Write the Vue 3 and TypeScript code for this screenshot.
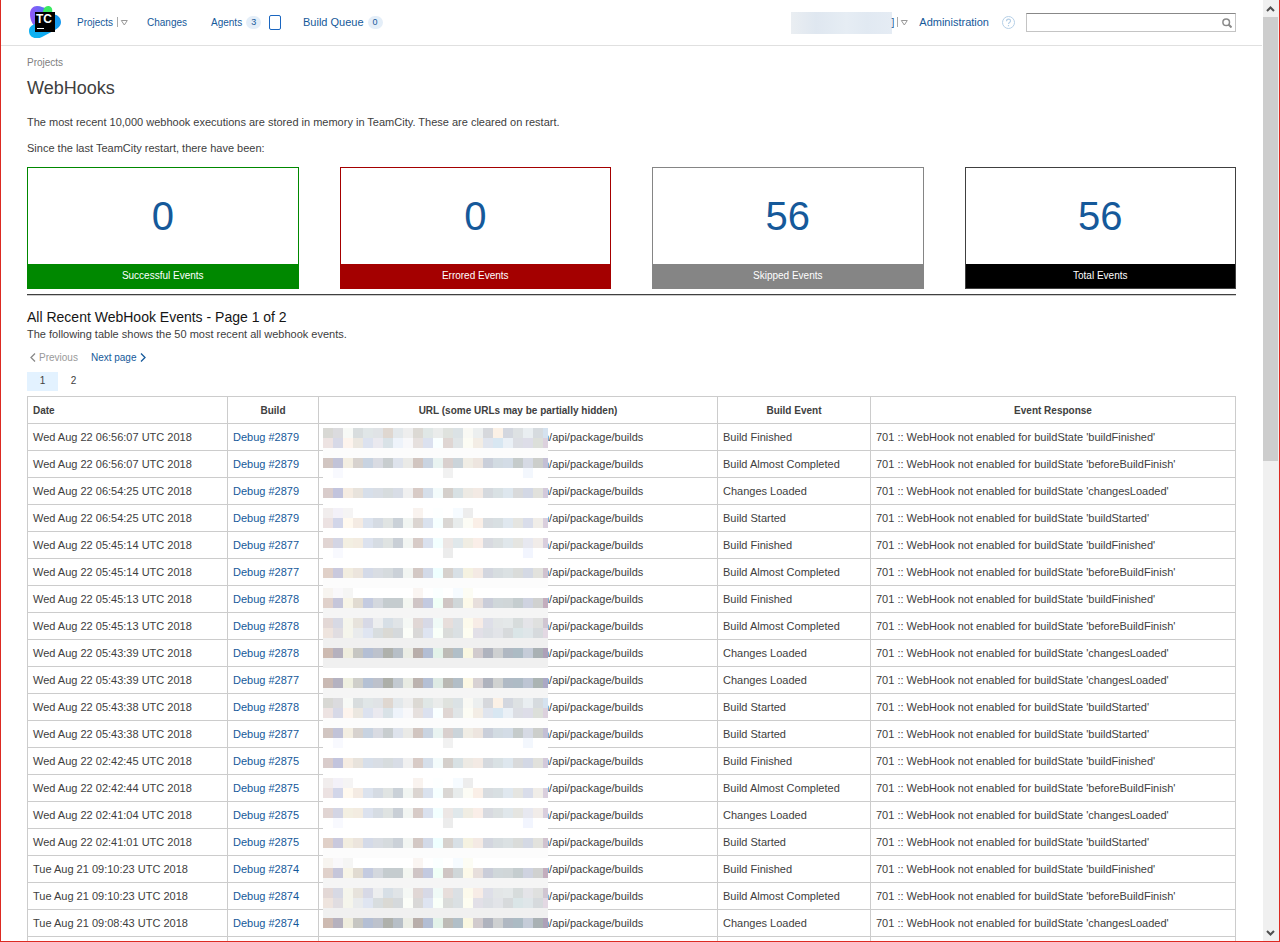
<script setup lang="ts">
interface Card {
  label: string
  count: number
  kind: string
}
interface EventRow {
  date: string
  build: string
  event: string
  state: string
}

const cards: Card[] = [
  { label: 'Successful Events', count: 0, kind: 'success' },
  { label: 'Errored Events', count: 0, kind: 'error' },
  { label: 'Skipped Events', count: 56, kind: 'skipped' },
  { label: 'Total Events', count: 56, kind: 'total' },
]

const states: Record<string, [string, string]> = {
  F: ['Build Finished', 'buildFinished'],
  A: ['Build Almost Completed', 'beforeBuildFinish'],
  C: ['Changes Loaded', 'changesLoaded'],
  S: ['Build Started', 'buildStarted'],
}

const log: [string, string, string][] = [
  ['Wed Aug 22 06:56:07', '2879', 'F'],
  ['Wed Aug 22 06:56:07', '2879', 'A'],
  ['Wed Aug 22 06:54:25', '2879', 'C'],
  ['Wed Aug 22 06:54:25', '2879', 'S'],
  ['Wed Aug 22 05:45:14', '2877', 'F'],
  ['Wed Aug 22 05:45:14', '2877', 'A'],
  ['Wed Aug 22 05:45:13', '2878', 'F'],
  ['Wed Aug 22 05:45:13', '2878', 'A'],
  ['Wed Aug 22 05:43:39', '2878', 'C'],
  ['Wed Aug 22 05:43:39', '2877', 'C'],
  ['Wed Aug 22 05:43:38', '2878', 'S'],
  ['Wed Aug 22 05:43:38', '2877', 'S'],
  ['Wed Aug 22 02:42:45', '2875', 'F'],
  ['Wed Aug 22 02:42:44', '2875', 'A'],
  ['Wed Aug 22 02:41:04', '2875', 'C'],
  ['Wed Aug 22 02:41:01', '2875', 'S'],
  ['Tue Aug 21 09:10:23', '2874', 'F'],
  ['Tue Aug 21 09:10:23', '2874', 'A'],
  ['Tue Aug 21 09:08:43', '2874', 'C'],
]

const rows: EventRow[] = log.map(([date, build, key]) => ({
  date: `${date} UTC 2018`,
  build: `Debug #${build}`,
  event: states[key][0],
  state: states[key][1],
}))

/* Pixelated mask over the host part of the URLs: 23 cells per strip, the strips repeat. */
const pale = (hex: string): string => Array(23).fill(hex).join(' ')
const strips: string[] = [
  'd8d8d4 dbdbde f7f9f6 d8ddde e0e6e7 e0e3e6 dfd7d0 e3e8eb eeeeee dcd9d4 e0e7e6 eaeceb dfe2de dbe2e5 f9f9f4 ecefef d6d8dc fbf1e6 d3d7df dde1e3 e9eef1 d6dbdf d5e2ef',
  'ede3e2 d7d9e7 fdf4ed ebe7e0 dce2ef eae9ef d9e2e7 eef3fa f8f8fa e6e0de dbe1ef f9ffff dfd6d3 e0e5e7 fcfcf4 f3ede5 e0e5ee d8e7f2 eaf0f6 dcdee4 dddde8 dcdfda dcd1de',
  pale('fcfcfc'),
  'd1c5c1 c1c3d8 f3eee2 d7d2ce c8d3e1 d9dbe2 c8cdcf dee3ec eaeae7 d1c5c0 cad4e1 e9f3f1 d9d0ce cbd4da f0ede5 ede5df cacfda d2dbe2 d3dce6 c5cbcb d6dae4 cccecb c3bfd5',
  'ffffff f8f9fe ffffff ffffff ffffff ffffff ffffff ffffff ffffff ffffff ffffff ffffff f1f1f1 ffffff ffffff ffffff ffffff ffffff ffffff ffffff f3f7fd ffffff ffffff',
  pale('ffffff'),
  'd9cccb c2c4dd f5ece2 e8e3dc d7dfea d9dee5 d7dcde d8dde6 f0f0f0 d8cbc6 d6dfea f3fbfb d4cfcb d8e1e4 edeae4 f3eae4 d5d9de d9e1e4 dee7ee d9dadb d3d8e5 e1e1dc d3c9db',
  pale('ffffff'),
  'f1eded f3f1f8 f5f4f4 ffffff ffffff ffffff ffffff ffffff ffffff f9f3ef ffffff fdffff ffffff f6fbff ededed ffffff ffffff ffffff ffffff ffffff ffffff ffffff ffffff',
  'ece2e2 d2d6e9 fff9ef f4ebe3 dce3ee d5dbe3 e0e4e3 cad1d8 f1f5f2 dbd5d1 dae2ee f6ffff dad7d4 e8ecec fcfcf5 faefe7 d8dce0 d8dfe2 e0e8ef e5e5e1 d9ddea f0ede8 d9cedd',
  pale('ffffff'),
  'e1d5d3 d3d5e4 f3efe2 f3ece1 dce2ee d6dce3 dfe3e2 c9cfd6 f2f5f2 d7cbc7 dae1ee f3ffff ece7e5 e0e8eb f0ede3 faeee8 d8dae0 dbe0e1 e0e7eb e5e5e1 e7e8f0 f1ece9 d9cedd',
  'ffffff f8f9fe ffffff ffffff ffffff ffffff ffffff ffffff ffffff ffffff ffffff ffffff ececec ffffff ffffff ffffff ffffff ffffff ffffff ffffff f2f5fe ffffff ffffff',
  pale('ffffff'),
  'e0d0c8 c9c9dd f2ede0 ece5dd d4dae8 d9dde3 d6dbde cbd1d8 f2f5f2 d3c8c4 d3dae8 efffff d6d1cd d8e0e6 f5f2e1 f4eae4 d3d6df d7dde0 dbe1e3 dadcda d4d9e4 e2e2dd d0c2cf',
  pale('fcfcfc'),
  'f7f4f0 f9f8fa f5f5f4 ffffff ffffff ffffff ffffff ffffff ffffff faf5f2 ffffff fbffff ffffff f6fbff fcfcf4 ffffff ffffff ffffff ffffff ffffff ffffff ffffff ffffff',
  'e0d1cb c5c6da f7f4e7 e1dbd1 c4cbe0 d4d8de c5cccf c5cccf f3f6f1 cfc5c5 c3cae0 f0fff7 cfc6c4 d0d7d9 fcf9e9 e7dfdc cacdd9 d0d7da d0d6d8 c5cdcf cfd3e0 d0d1d0 c3adbd',
  pale('f5f5f5'),
  'e3d8d6 d7d9e4 f5f5ec e7e3dc d7d9e6 edeeef d7dfe6 e0e4e7 f5f8f5 e0d7d5 d7d9e6 f0faf7 e7dedb dbe0e4 fcfaec f7ece6 dedfe8 e3e6e7 e4e8e9 d7dcdc e4e4e8 dfe0df d0c6d2',
  'eee4de e0dde1 f5f5ec e9ebec dfe5f1 d8dddf dad9d4 d5d9dc fbfdf8 d9d8d7 dee4f1 f9fff9 dadcda dae0e3 fdfdf1 e2e0e7 dcdfe4 e2e4e8 d7dadc dae5e7 dfe6e9 d6dadd e3d8e3',
  pale('f0f0f0'),
  'cdbab1 b5b1be efedde c6c6c2 b4bfd4 bdc2cc afb1ac b7bfc7 ebede5 b8aeaa b3bed4 e3f2e9 bdbbb6 b1bfc8 f9f7e1 d1cbcd afb3be ced0d1 b0b8c2 acbbc4 c5ccd8 a9b1b4 ada0b8',
  pale('f0f0f0'),
  pale('ffffff'),
  'c9b9b3 b4b2c1 eff0e1 cfcfca b5c1d4 bdc1cb adafa9 c3cad1 e8ebe3 bcb3af b5c0d5 deeae4 b9b8b3 b2bec7 fcf8e4 d8d2d3 afb3be d0d2d1 b0bac5 aebbc5 bdc5d3 abb4b3 aba8c5',
  pale('f5f5f5'),
]
const maskRows: string[][] = Array.from({ length: 50 }, (_, i) => strips[i % 27].split(' ').map((c) => `#${c}`))
</script>

<template>
  <div class="window">
    <div class="page">
      <header class="topbar">
        <a href="#" class="logo" aria-label="TeamCity">
          <svg width="32" height="32" viewBox="0 0 32 32">
            <defs>
              <linearGradient id="violet" x1="0" y1="0" x2="1" y2="0">
                <stop offset="0" stop-color="#9058f8" />
                <stop offset="1" stop-color="#3b7df2" />
              </linearGradient>
              <linearGradient id="azure" x1="1" y1="0" x2="0" y2="1">
                <stop offset="0" stop-color="#1a93ee" />
                <stop offset="1" stop-color="#0cb6f2" />
              </linearGradient>
            </defs>
            <path d="M1 8C1 3 4 0 8 0c4 0 7 2 12 3l3 8-17 10C2 16 1 12 1 8z" fill="url(#violet)" />
            <path d="M14 7c0-4 2-7 5-7s5 2 4 7z" fill="#3bea62" />
            <path d="M25 8.500c4 0 7 4 7 7.500 0 4-3 6-6 8l-13 7c-5 3-13 1-13-6 0-4 3-6 6-7z" fill="url(#azure)" />
            <rect x="6" y="6" width="20" height="20" fill="#000" />
            <rect x="8" y="22" width="7" height="1" fill="#fff" />
            <text x="7" y="17" class="logo-text">TC</text>
          </svg>
        </a>
        <nav class="nav">
          <div class="nav-item projects">
            <a href="#">Projects</a>
            <button class="drop" aria-label="Projects menu">
              <svg width="11" height="11" viewBox="0 0 11 11"><path d="M.5 0v10" stroke="#aaa" /><path d="M4.300 3.500h6L7.300 8z" fill="none" stroke="#999" /></svg>
            </button>
          </div>
          <a href="#" class="nav-item changes">Changes</a>
          <div class="nav-item agents">
            <a href="#">Agents</a><span class="badge">3</span>
            <button class="agent-box" aria-label="Agents overview"></button>
          </div>
          <div class="nav-item queue"><a href="#">Build Queue</a><span class="badge">0</span></div>
        </nav>
        <div class="user">
          <span class="blurred"></span><a href="#">]</a>
          <button class="drop" aria-label="User menu">
            <svg width="11" height="11" viewBox="0 0 11 11"><path d="M.5 0v10" stroke="#aaa" /><path d="M4.300 3.500h6L7.300 8z" fill="none" stroke="#999" /></svg>
          </button>
        </div>
        <a href="#" class="admin">Administration</a>
        <button class="help" aria-label="Help">
          <svg width="13" height="13" viewBox="0 0 13 13" fill="none" stroke="#b5cfe6">
            <circle cx="6.500" cy="6.500" r="6" />
            <path d="M4.500 5.200c0-2.800 4-2.600 4-.3 0 1.500-2 1.500-2 3M6.500 9v1.200" stroke-width="1.200" />
          </svg>
        </button>
        <form class="search" @submit.prevent>
          <input type="text" aria-label="Search" />
          <button type="submit" aria-label="Search">
            <svg width="10" height="10" viewBox="0 0 10 10" fill="none" stroke="#8a8a8a">
              <circle cx="4.200" cy="4.200" r="3.300" stroke-width="1.500" />
              <path d="M6.500 6.500l3 3" stroke-width="2" />
            </svg>
          </button>
        </form>
      </header>

      <main>
        <a href="#" class="crumb">Projects</a>
        <h1>WebHooks</h1>
        <p class="intro">The most recent 10,000 webhook executions are stored in memory in TeamCity. These are cleared on restart.</p>
        <p class="intro">Since the last TeamCity restart, there have been:</p>

        <section class="cards">
          <div v-for="card in cards" :key="card.label" class="card" :class="card.kind">
            <a href="#" class="count">{{ card.count }}</a>
            <div class="label">{{ card.label }}</div>
          </div>
        </section>

        <h2>All Recent WebHook Events - Page 1 of 2</h2>
        <p class="sub">The following table shows the 50 most recent all webhook events.</p>
        <div class="pager">
          <span class="prev">
            <svg width="6" height="9" viewBox="0 0 6 9"><path d="M5 .5l-4 4 4 4" fill="none" stroke="#8a8a8a" stroke-width="1.300" /></svg>
            Previous
          </span>
          <a href="#" class="next">
            Next page
            <svg width="6" height="9" viewBox="0 0 6 9"><path d="M1 .5l4 4-4 4" fill="none" stroke="#15599a" stroke-width="1.300" /></svg>
          </a>
        </div>
        <div class="pages">
          <span class="current">1</span>
          <a href="#">2</a>
        </div>

        <div class="table-wrap">
          <table>
            <colgroup>
              <col class="c-date" /><col class="c-build" /><col class="c-url" /><col class="c-event" /><col />
            </colgroup>
            <thead>
              <tr>
                <th class="left">Date</th>
                <th>Build</th>
                <th>URL (some URLs may be partially hidden)</th>
                <th>Build Event</th>
                <th>Event Response</th>
              </tr>
            </thead>
            <tbody>
              <tr v-for="(row, i) in rows" :key="i">
                <td>{{ row.date }}</td>
                <td><a href="#">{{ row.build }}</a></td>
                <td class="url">n/api/package/builds</td>
                <td>{{ row.event }}</td>
                <td>701 :: WebHook not enabled for buildState '{{ row.state }}'</td>
              </tr>
              <tr><td></td><td></td><td></td><td></td><td></td></tr>
            </tbody>
          </table>
          <svg class="mask" width="225" height="500" viewBox="0 0 225 500" shape-rendering="crispEdges" aria-hidden="true">
            <g v-for="(cells, r) in maskRows" :key="r">
              <rect v-for="(cell, c) in cells" :key="c" :x="c * 10" :y="r * 10" width="10" height="10" :fill="cell" />
            </g>
          </svg>
        </div>
      </main>
    </div>
    <div class="scrollbar" aria-hidden="true">
      <svg width="15" height="17" viewBox="0 0 15 17"><path d="M4 11l3.500-3.500L11 11" fill="none" stroke="#505050" stroke-width="2" /></svg>
      <div class="track"><div class="thumb"></div></div>
      <svg width="15" height="17" viewBox="0 0 15 17"><path d="M4 7l3.500 3.500L11 7" fill="none" stroke="#505050" stroke-width="2" /></svg>
    </div>
  </div>
</template>

<style>
body {
  margin: 0;
}
</style>

<style scoped>
* {
  box-sizing: border-box;
}
.window {
  display: flex;
  height: 100vh;
  overflow: hidden;
  border: solid #dc2a22;
  border-width: 0 1px 1px;
  background: #fff;
  color: #404040;
  font: 10px/13px "Liberation Sans", Arial, sans-serif;
}
.page {
  flex: 1;
  min-width: 0;
  overflow: hidden;
}
a {
  color: #15599a;
  text-decoration: none;
}
button {
  padding: 0;
  border: 0;
  background: none;
}
svg {
  display: block;
}
.topbar {
  display: flex;
  align-items: center;
  height: 46px;
  padding: 0 26px 0 28px;
  border-bottom: 1px solid #e0e0e0;
}
.logo {
  height: 33px;
  margin-right: 16px;
}
.logo-text {
  fill: #fff;
  font: bold 12px "Liberation Sans", Arial, sans-serif;
}
.nav {
  display: flex;
  flex: 1;
  align-items: center;
}
.nav-item {
  display: flex;
  align-items: center;
}
.projects {
  width: 70px;
  gap: 4px;
}
.changes {
  width: 64px;
}
.agents {
  width: 92px;
}
.badge {
  min-width: 15px;
  margin-left: 4px;
  border-radius: 7px;
  background: #e4eef8;
  color: #15599a;
  font-size: 9px;
  text-align: center;
}
.agent-box {
  width: 12px;
  height: 15px;
  margin-left: 8px;
  border: 1px solid #1a66c0;
  border-radius: 2px;
}
.user {
  display: flex;
  align-items: center;
  margin-right: 11px;
}
.user .drop {
  margin-left: 3px;
}
.blurred {
  width: 101px;
  height: 22px;
  background: linear-gradient(90deg, #eaeef2, #dfe7f0 25%, #e6edf4 55%, #e1e9f2 75%, #e5ecf4);
}
.admin {
  margin-right: 13px;
}
.admin,
.queue a,
.intro,
.sub,
td {
  font-size: 11px;
}
.help {
  margin-right: 11px;
}
.search {
  display: flex;
  align-items: center;
  width: 210px;
  height: 19px;
  border: 1px solid #c4c4c4;
  border-top-color: #888;
}
.search input {
  flex: 1;
  min-width: 0;
  padding: 0 4px;
  border: 0;
  outline: 0;
  background: none;
}
.search button {
  margin-right: 3px;
}
main {
  padding: 10px 26px 0;
}
.crumb {
  display: block;
  color: #808080;
}
h1 {
  margin: 8px 0 17px;
  font-size: 18px;
  font-weight: normal;
  line-height: 22px;
}
p {
  margin: 0;
}
.intro {
  margin-bottom: 13px;
}
.cards {
  display: grid;
  grid-template-columns: repeat(4, 1fr);
  gap: 41px;
  margin-top: -1px;
  padding-bottom: 5px;
  border-bottom: 1px solid #404040;
  box-shadow: 0 1px #ccc;
}
.card {
  border: 1px solid;
}
.count {
  display: block;
  height: 96px;
  font-size: 40px;
  line-height: 96px;
  text-align: center;
}
.label {
  height: 24px;
  color: #fff;
  line-height: 24px;
  text-align: center;
}
.success {
  border-color: #080;
}
.success .label {
  background: #080;
}
.error {
  border-color: #a40000;
}
.error .label {
  background: #a40000;
}
.skipped {
  border-color: #858585;
}
.skipped .label {
  background: #858585;
}
.total {
  border-color: #404040;
}
.total .label {
  background: #000;
}
h2 {
  margin: 13px 0 2px;
  color: #151515;
  font-size: 14px;
  font-weight: normal;
  line-height: 18px;
}
.pager {
  display: flex;
  gap: 13px;
  margin-top: 10px;
  padding-left: 3px;
}
.prev,
.next {
  display: flex;
  align-items: center;
  gap: 3px;
}
.prev {
  color: #999;
}
.pages {
  display: flex;
  margin: 8px 0 5px;
}
.pages > * {
  width: 31px;
  height: 19px;
  color: #404040;
  line-height: 17px;
  text-align: center;
}
.pages .current {
  background: #e3f2ff;
}
.table-wrap {
  position: relative;
}
table {
  width: 100%;
  border-collapse: collapse;
  table-layout: fixed;
}
.c-date {
  width: 200px;
}
.c-build {
  width: 91px;
}
.c-url {
  width: 399px;
}
.c-event {
  width: 153px;
}
th,
td {
  height: 27px;
  padding: 0 5px;
  border: 1px solid #ccc;
  text-align: left;
  white-space: nowrap;
}
th {
  text-align: center;
}
.left {
  text-align: left;
}
.url {
  padding-left: 224px;
}
.mask {
  position: absolute;
  top: 32px;
  left: 296px;
}
.scrollbar {
  display: flex;
  flex-direction: column;
  width: 17px;
  padding-right: 1px;
  border-left: 1px solid #fff;
  background: #f0f0f0;
}
.track {
  flex: 1;
}
.thumb {
  height: 49%;
  background: #cdcdcd;
}
</style>
